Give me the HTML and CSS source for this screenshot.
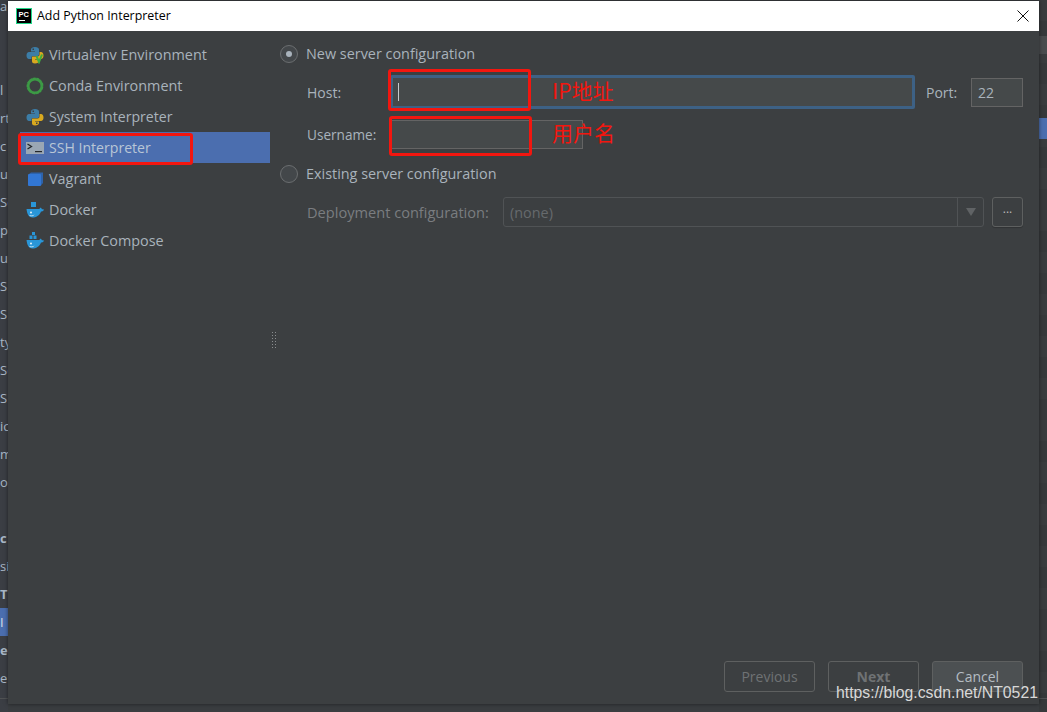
FILE: index.html
```html
<!DOCTYPE html>
<html lang="en">
<head>
    <meta charset="UTF-8">
    <meta name="viewport" content="width=device-width, initial-scale=1.0">
    <title>Add Python Interpreter</title>
    <link rel="stylesheet" href="styles.css">
</head>
<body>

    <!-- Settings window peeking out behind the dialog -->
    <div class="behind-left">
        <div class="behind-row">a</div>
        <div class="behind-row"></div>
        <div class="behind-row"></div>
        <div class="behind-row">l</div>
        <div class="behind-row">rt</div>
        <div class="behind-row">c</div>
        <div class="behind-row">u</div>
        <div class="behind-row">So</div>
        <div class="behind-row">pe</div>
        <div class="behind-row">u</div>
        <div class="behind-row">S</div>
        <div class="behind-row">S</div>
        <div class="behind-row">ty</div>
        <div class="behind-row">So</div>
        <div class="behind-row">S</div>
        <div class="behind-row">ic</div>
        <div class="behind-row">m</div>
        <div class="behind-row">or</div>
        <div class="behind-row"></div>
        <div class="behind-row bold">c</div>
        <div class="behind-row">si</div>
        <div class="behind-row bold">T</div>
        <div class="behind-row picked">I</div>
        <div class="behind-row bold">ec</div>
        <div class="behind-row">e</div>
    </div>

    <div class="dialog">
        <div class="titlebar">
            <svg class="app-icon" width="16" height="16" viewBox="0 0 16 16">
                <rect x="0.5" y="0.5" width="15" height="15" fill="#000" stroke="#21d789"/>
                <rect x="3" y="12" width="6" height="1" fill="#fff"/>
                <text x="2.5" y="9" class="app-icon-text">PC</text>
            </svg>
            <span class="title">Add Python Interpreter</span>
            <svg class="close" width="12" height="12" viewBox="0 0 12 12">
                <path d="M0.5 0.5L11.5 11.5M11.5 0.5L0.5 11.5" stroke="#111" stroke-width="1" fill="none"/>
            </svg>
        </div>

        <div class="content">
            <!-- Interpreter types -->
            <div class="sidebar">
                <div class="item">
                    <svg class="icon" width="18" height="18" viewBox="0 0 18 18">
                        <path d="M5 7V3.500C5 2 6.500 1 9 1s4 1 4 2.500V8.500C13 9.500 12 10 11 10H7C6 10 5.500 10.500 5.500 11.500V13H3C1.500 13 0.500 11.500 0.500 9.500S1.500 6 3 6H9V5.500H5Z" fill="#3c7da6"/>
                        <path d="M6 11C6 10.500 6.500 10.500 7 10.500H11.500C12.800 10.500 13.500 9.500 13.500 8.500V6H15C16.500 6 17.500 7.500 17.500 9.500S16.500 13 15 13H9V13.500H13V15C13 16.500 11.500 17.500 9 17.500S6 16.500 6 15Z" fill="#d9a91f"/>
                        <rect x="6.500" y="2.500" width="1.500" height="1.500" fill="#3c3f41"/>
                        <path d="M10.500 10L13 16L16 8.500" fill="none" stroke="#3fae3f" stroke-width="2"/>
                    </svg>
                    Virtualenv Environment
                </div>
                <div class="item">
                    <svg class="icon" width="18" height="18" viewBox="0 0 18 18">
                        <circle cx="9" cy="9" r="7" fill="none" stroke="#3c9a45" stroke-width="3"/>
                        <circle cx="9" cy="9" r="8.400" fill="none" stroke="#3c3f41" stroke-width="0.800" stroke-dasharray="1 3"/>
                    </svg>
                    Conda Environment
                </div>
                <div class="item narrow">
                    <svg class="icon" width="18" height="18" viewBox="0 0 18 18">
                        <path d="M5 7V3.500C5 2 6.500 1 9 1s4 1 4 2.500V8.500C13 9.500 12 10 11 10H7C6 10 5.500 10.500 5.500 11.500V13H3C1.500 13 0.500 11.500 0.500 9.500S1.500 6 3 6H9V5.500H5Z" fill="#3c7da6"/>
                        <path d="M6 11C6 10.500 6.500 10.500 7 10.500H11.500C12.800 10.500 13.500 9.500 13.500 8.500V6H15C16.500 6 17.500 7.500 17.500 9.500S16.500 13 15 13H9V13.500H13V15C13 16.500 11.500 17.500 9 17.500S6 16.500 6 15Z" fill="#d9a91f"/>
                        <rect x="6.500" y="2.500" width="1.500" height="1.500" fill="#3c3f41"/>
                        <rect x="10" y="14.500" width="1.500" height="1.500" fill="#3c3f41"/>
                    </svg>
                    System Interpreter
                </div>
                <div class="item narrow selected">
                    <svg class="icon" width="18" height="18" viewBox="0 0 18 18">
                        <rect x="0" y="3" width="18" height="12" fill="#9aa7b4"/>
                        <path d="M1.500 5L5.500 7.500L1.500 10" fill="none" stroke="#23272b" stroke-width="1.300"/>
                        <rect x="9" y="12" width="7" height="1.200" fill="#23272b"/>
                    </svg>
                    SSH Interpreter
                </div>
                <div class="item">
                    <svg class="icon" width="18" height="18" viewBox="0 0 18 18">
                        <path d="M3 4L5 2.500H17V13L15 15.500H3Z" fill="#2d63ab"/>
                        <rect x="2" y="4" width="13" height="12" rx="1" fill="#3277d4"/>
                    </svg>
                    Vagrant
                </div>
                <div class="item">
                    <svg class="icon" width="18" height="18" viewBox="0 0 18 18">
                        <rect x="5" y="1" width="5" height="5" fill="#2996d8"/>
                        <path d="M0.500 8H13.500C13.700 7 14.500 6.500 15 6.800C15.500 7.400 15.500 8 16 8.300C16.600 8.200 17.300 8.300 18 8.800C17 10.300 16 10.500 15 10.500C13.500 14.500 10 16.500 6.500 16.500C3 16.500 1 13 0.500 8Z" fill="#2996d8"/>
                        <circle cx="5" cy="11.500" r="0.900" fill="#fff"/>
                        <path d="M3 14C5 14.800 7 14.500 8.500 13.500C7.500 15.500 4.500 16 3 14Z" fill="#d5e9f5"/>
                    </svg>
                    Docker
                </div>
                <div class="item">
                    <svg class="icon" width="18" height="18" viewBox="0 0 18 18">
                        <rect x="6" y="0" width="3" height="3" fill="#2996d8"/>
                        <rect x="3.500" y="3.500" width="3" height="3.500" fill="#2996d8"/>
                        <rect x="7.500" y="3.500" width="3" height="3.500" fill="#2996d8"/>
                        <path d="M0.500 8H13.500C13.700 7 14.500 6.500 15 6.800C15.500 7.400 15.500 8 16 8.300C16.600 8.200 17.300 8.300 18 8.800C17 10.300 16 10.500 15 10.500C13.500 14.500 10 16.500 6.500 16.500C3 16.500 1 13 0.500 8Z" fill="#2996d8"/>
                        <circle cx="5" cy="11.500" r="0.900" fill="#fff"/>
                        <path d="M3 14C5 14.800 7 14.500 8.500 13.500C7.500 15.500 4.500 16 3 14Z" fill="#d5e9f5"/>
                    </svg>
                    Docker Compose
                </div>
            </div>

            <div class="splitter">
                <span class="grip"></span>
            </div>

            <!-- Form -->
            <div class="form">
                <div class="radio-row">
                    <span class="radio checked"><span class="dot"></span></span>
                    New server configuration
                </div>
                <div class="host-row">
                    <span class="label">Host:</span>
                    <div class="host-field"><span class="caret"></span></div>
                    <span class="label port-label">Port:</span>
                    <div class="port-field">22</div>
                </div>
                <div class="user-row">
                    <span class="label">Username:</span>
                    <div class="user-field"></div>
                </div>
                <div class="radio-row second">
                    <span class="radio"></span>
                    Existing server configuration
                </div>
                <div class="deploy-row">
                    <span class="label muted">Deployment configuration:</span>
                    <div class="combo">
                        <span class="combo-value">(none)</span>
                        <span class="combo-arrow"><span class="triangle"></span></span>
                    </div>
                    <div class="more">...</div>
                </div>
            </div>
        </div>

        <div class="footer">
            <button class="btn" disabled>Previous</button>
            <button class="btn next" disabled>Next</button>
            <button class="btn cancel">Cancel</button>
        </div>
    </div>

    <div class="behind-right">
        <div class="behind-tab"></div>
        <div class="behind-picked"></div>
    </div>

    <!-- Red marks added on top of the screenshot -->
    <div class="mark mark-ssh"></div>
    <div class="mark mark-host"></div>
    <div class="mark mark-user"></div>
    <div class="note note-host">IP地址</div>
    <div class="note note-user">用户名</div>
    <div class="watermark">https://blog.csdn.net/NT0521</div>

</body>
</html>
```

FILE: styles.css
```css
html, body {
    height: 100%;
}
body {
    margin: 0;
    height: 712px;
    overflow: hidden;
    display: flex;
    position: relative;
    background-color: #3a3d40;
    font-family: "Open Sans", "Noto Sans", sans-serif;
    font-size: 14.4px;
    color: #a9b3bc;
}

/* window behind the dialog */
.behind-left {
    width: 8px;
    flex: none;
    margin-top: -8px;
    height: 720px;
    overflow: hidden;
    font-size: 13px;
    background: linear-gradient(#505254, #505254) 0 706px / 100% 1px no-repeat, #3b3e44;
}
.behind-row {
    height: 28px;
    line-height: 28px;
    white-space: nowrap;
    color: #a9b7c6;
}
.behind-row.bold {
    font-weight: bold;
}
.behind-row.picked {
    background-color: #4b6eaf;
    color: #d5dde6;
}
.behind-right {
    flex: none;
    width: 8px;
    padding-top: 36px;
    background:
        linear-gradient(#505254, #505254) 0 698px / 100% 1px no-repeat,
        repeating-linear-gradient(#393c3e 0, #393c3e 21px, #36393b 21px, #36393b 42px);
}
.behind-tab {
    height: 18px;
    background-color: #494c4e;
}
.behind-picked {
    height: 21px;
    margin-top: 64px;
    background-color: #4b6eaf;
}

/* dialog */
.dialog {
    flex: 1;
    height: 703px;
    margin-top: 1px;
    display: flex;
    flex-direction: column;
    position: relative;
    z-index: 1;
    background-color: #3c3f41;
    box-shadow: 0 0 4px rgba(0, 0, 0, 0.5);
}
.titlebar {
    height: 30px;
    flex: none;
    display: flex;
    align-items: center;
    padding: 0 10px 0 8px;
    background-color: #fff;
    color: #000;
    font-size: 12.4px;
}
.app-icon {
    margin-right: 5px;
}
.app-icon-text {
    font-family: "Liberation Sans", sans-serif;
    font-size: 7.500px;
    font-weight: bold;
    fill: #fff;
}
.title {
    flex: 1;
    margin-top: -1px;
}
.content {
    flex: 1;
    display: flex;
    min-height: 0;
}

/* left list */
.sidebar {
    width: 250px;
    flex: none;
    margin-left: 12px;
    padding-top: 8px;
}
.item {
    height: 31px;
    display: flex;
    align-items: center;
    padding-left: 6px;
    box-sizing: border-box;
    white-space: nowrap;
}
.item.narrow {
    font-size: 14.1px;
}
.item.selected {
    background-color: #4b6eaf;
    color: #b9c6d6;
}
.icon {
    margin-right: 5px;
    flex: none;
}
.splitter {
    width: 10px;
    flex: none;
    display: flex;
    align-items: center;
    padding-bottom: 12px;
    padding-left: 1px;
    box-sizing: border-box;
}
.grip {
    width: 6px;
    height: 18px;
    background-image: radial-gradient(#8a8d8f 1px, transparent 1px);
    background-size: 3px 3px;
}

/* form */
.form {
    flex: 1;
    padding: 7px 16px 0 0;
}
.radio-row {
    display: flex;
    align-items: center;
    height: 31px;
    color: #a9b3bc;
}
.radio-row.second {
    margin-top: 9px;
}
.radio {
    width: 16px;
    height: 16px;
    margin-right: 8px;
    border: 1px solid #6b6e70;
    border-radius: 50%;
    background-color: #43474a;
    display: flex;
    align-items: center;
    justify-content: center;
}
.dot {
    width: 6px;
    height: 6px;
    border-radius: 50%;
    background-color: #a9b3bc;
}
.label {
    font-size: 14px;
    color: #a9b3bc;
}
.label.muted {
    font-size: 14.6px;
    color: #7a7d80;
}
.host-row {
    display: flex;
    align-items: center;
    height: 34px;
    margin-top: 6px;
    padding-left: 27px;
}
.host-row .label {
    width: 83px;
    flex: none;
}
.host-field {
    flex: 1;
    height: 34px;
    box-sizing: border-box;
    border: 3px solid #3d6185;
    border-radius: 2px;
    background-color: #45494a;
    display: flex;
    align-items: center;
    padding-left: 5px;
}
.caret {
    width: 1px;
    height: 18px;
    background-color: #c5c8cb;
}
.host-row .port-label {
    width: 45px;
    margin-left: 11px;
}
.port-field {
    width: 52px;
    height: 29px;
    box-sizing: border-box;
    flex: none;
    border: 1px solid #646464;
    background-color: #45494a;
    font-size: 14px;
    line-height: 27px;
    padding-left: 6px;
}
.user-row {
    display: flex;
    align-items: center;
    height: 29px;
    margin-top: 11px;
    padding-left: 27px;
}
.user-row .label {
    width: 84px;
    flex: none;
    font-size: 13.6px;
}
.user-field {
    width: 192px;
    height: 29px;
    box-sizing: border-box;
    border: 1px solid #646464;
    background-color: #45494a;
}
.deploy-row {
    display: flex;
    align-items: center;
    height: 30px;
    margin-top: 8px;
    padding-left: 27px;
}
.deploy-row .label {
    width: 196px;
    flex: none;
    margin-top: -1px;
}
.combo {
    flex: 1;
    height: 30px;
    box-sizing: border-box;
    border: 1px solid #505355;
    border-radius: 3px;
    display: flex;
    align-items: center;
}
.combo-value {
    flex: 1;
    padding-left: 6px;
    color: #666a6d;
}
.combo-arrow {
    width: 25px;
    height: 100%;
    border-left: 1px solid #505355;
    display: flex;
    align-items: center;
    justify-content: center;
}
.triangle {
    border-left: 5px solid transparent;
    border-right: 5px solid transparent;
    border-top: 8px solid #606365;
}
.more {
    width: 31px;
    height: 30px;
    box-sizing: border-box;
    margin-left: 8px;
    border: 1px solid #5e6060;
    border-radius: 3px;
    box-shadow: 0 1px 1px rgba(0, 0, 0, 0.2);
    text-align: center;
    line-height: 22px;
    font-size: 12px;
    color: #bbb;
}

/* buttons */
.footer {
    display: flex;
    justify-content: flex-end;
    gap: 13px;
    flex: none;
    padding: 0 16px 12px 0;
}
.btn {
    width: 91px;
    height: 31px;
    padding: 0;
    border: 1px solid #5e6060;
    border-radius: 3px;
    background-color: #3c3f41;
    color: #6f7274;
    font-family: inherit;
    font-size: 14px;
}
.btn.next {
    font-weight: bold;
}
.btn.cancel {
    background-color: #4c5052;
    color: #b4bcc3;
}

/* annotations */
.mark {
    position: absolute;
    z-index: 2;
    box-sizing: border-box;
    border: 3px solid #f3160f;
    border-radius: 3px;
}
.mark-ssh {
    left: 18px;
    top: 133px;
    width: 175px;
    height: 32px;
}
.mark-host {
    left: 388px;
    top: 69px;
    width: 143px;
    height: 42px;
}
.mark-user {
    left: 389px;
    top: 116px;
    width: 143px;
    height: 40px;
}
.note {
    position: absolute;
    z-index: 2;
    left: 552px;
    font-family: "Noto Sans CJK SC", sans-serif;
    font-size: 21px;
    line-height: 28px;
    color: #f3160f;
}
.note-host {
    top: 76px;
}
.note-user {
    top: 118px;
}
.watermark {
    position: absolute;
    z-index: 2;
    left: 836px;
    top: 683px;
    font-family: "Liberation Sans", sans-serif;
    font-size: 15.8px;
    line-height: 20px;
    color: #d8d8d8;
    white-space: nowrap;
}
```
